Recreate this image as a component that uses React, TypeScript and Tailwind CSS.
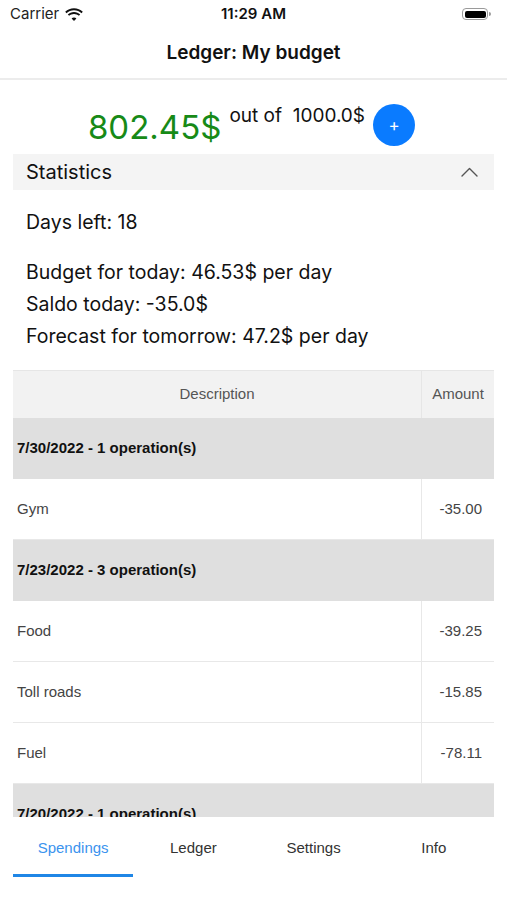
const sf = { fontFamily: "Inter, 'Noto Sans', sans-serif" };
const arial = { fontFamily: "'Liberation Sans', Arial, sans-serif" };

type Row = { kind: "group"; label: string } | { kind: "item"; label: string; amount: string };

const rows: Row[] = [
  { kind: "group", label: "7/30/2022 - 1 operation(s)" },
  { kind: "item", label: "Gym", amount: "-35.00" },
  { kind: "group", label: "7/23/2022 - 3 operation(s)" },
  { kind: "item", label: "Food", amount: "-39.25" },
  { kind: "item", label: "Toll roads", amount: "-15.85" },
  { kind: "item", label: "Fuel", amount: "-78.11" },
  { kind: "group", label: "7/20/2022 - 1 operation(s)" },
  { kind: "item", label: "Coffee", amount: "-4.50" },
];

function Wifi() {
  return (
    <svg width="18" height="13" viewBox="0 0 18 13">
      <path d="M9 2.2c2.9 0 5.5 1.1 7.5 3l1.3-1.4C15.5 1.6 12.4.3 9 .3S2.5 1.6.2 3.8l1.3 1.4c2-1.9 4.6-3 7.5-3z" fill="#111" />
      <path d="M9 5.9c1.9 0 3.6.7 4.9 1.9l1.3-1.4C13.6 4.9 11.4 4 9 4s-4.6.9-6.2 2.4l1.3 1.4C5.4 6.6 7.1 5.9 9 5.9z" fill="#111" />
      <path d="M9 9.5c.9 0 1.8.4 2.4.9L9 13l-2.4-2.6c.6-.5 1.5-.9 2.4-.9z" fill="#111" />
    </svg>
  );
}

function Battery() {
  return (
    <div className="flex items-center">
      <div className="flex h-[12px] w-[26px] items-center rounded-[4px] border border-[#9a9a9a] p-[1.5px]">
        <div className="h-full w-full rounded-[2px] bg-black" />
      </div>
      <div className="ml-[1px] h-[4px] w-[2px] rounded-r-sm bg-[#9a9a9a]" />
    </div>
  );
}

function Chevron() {
  return (
    <svg width="17" height="10" viewBox="0 0 17 10" fill="none">
      <polyline points="1,9 8.5,1.5 16,9" stroke="#555" strokeWidth="1.4" strokeLinecap="round" strokeLinejoin="round" />
    </svg>
  );
}

function TableRow({ row }: { row: Row }) {
  if (row.kind === "group") {
    return (
      <div className="flex h-[61px] shrink-0 items-center bg-[#dfdfdf] px-[4px] text-[15px] font-bold text-[#111]">
        {row.label}
      </div>
    );
  }
  return (
    <div className="flex h-[61px] shrink-0 border-b border-[#e8e8e8] bg-white text-[15px] text-[#444]">
      <div className="flex flex-1 items-center border-r border-[#e8e8e8] px-[4px]">{row.label}</div>
      <div className="flex w-[72px] items-center justify-end pr-[12px]">{row.amount}</div>
    </div>
  );
}

export default function App() {
  return (
    <div className="flex h-[900px] w-[507px] flex-col overflow-hidden bg-white" style={sf}>
      <div className="relative flex h-[28px] shrink-0 items-center justify-between px-[10px]">
        <div className="flex items-center gap-[6px] text-[15px] text-[#222]">
          <span>Carrier</span>
          <Wifi />
        </div>
        <span className="absolute left-1/2 -translate-x-1/2 text-[15px] font-semibold text-[#111]">11:29 AM</span>
        <div className="pr-[6px]">
          <Battery />
        </div>
      </div>

      <div className="flex h-[52px] shrink-0 items-center justify-center border-b-2 border-[#ececec] pt-[1px] text-[19px] font-semibold text-[#111]">
        Ledger: My budget
      </div>

      <div className="mt-[24px] flex h-[42px] shrink-0 items-start justify-center pr-[4px]">
        <span className="mt-[2px] text-[33px] leading-[42px] text-[#178a17]">802.45$</span>
        <span className="ml-[8px] text-[19px] leading-[24px] text-[#111]">out of&nbsp; 1000.0$</span>
        <button className="ml-[8px] flex h-[42px] w-[42px] items-center justify-center rounded-full bg-[#0a7bff] text-[17px] leading-none text-white">
          +
        </button>
      </div>

      <div className="mx-[13px] mt-[8px] flex h-[36px] shrink-0 items-center justify-between bg-[#f4f4f4] pl-[13px] pr-[16px]">
        <span className="text-[20px] text-[#111]">Statistics</span>
        <Chevron />
      </div>

      <div className="shrink-0 px-[26px] pt-[16px] text-[19.5px] leading-[32px] text-[#111]">
        <p>Days left: 18</p>
        <p className="mt-[18px]">Budget for today: 46.53$ per day</p>
        <p>Saldo today: -35.0$</p>
        <p>Forecast for tomorrow: 47.2$ per day</p>
      </div>

      <div className="mx-[13px] mt-[18px] flex h-[447px] shrink-0 flex-col overflow-hidden border-t border-[#e6e6e6]" style={arial}>
        <div className="flex h-[47px] shrink-0 bg-[#f2f2f2] text-[15px] text-[#555]">
          <div className="flex flex-1 items-center justify-center border-r border-[#e6e6e6]">Description</div>
          <div className="flex w-[72px] items-center justify-center">Amount</div>
        </div>
        {rows.map((r, i) => (
          <TableRow key={i} row={r} />
        ))}
      </div>

      <div className="mx-[13px] flex h-[60px] shrink-0" style={arial}>
        {["Spendings", "Ledger", "Settings", "Info"].map((t, i) => (
          <div key={t} className="flex flex-1 flex-col">
            <div className={`flex flex-1 items-center justify-center pt-[5px] text-[15px] ${i === 0 ? "text-[#3b93ee]" : "text-[#333]"}`}>
              {t}
            </div>
            <div className={`h-[3px] ${i === 0 ? "bg-[#1f86e6]" : ""}`} />
          </div>
        ))}
      </div>
    </div>
  );
}
